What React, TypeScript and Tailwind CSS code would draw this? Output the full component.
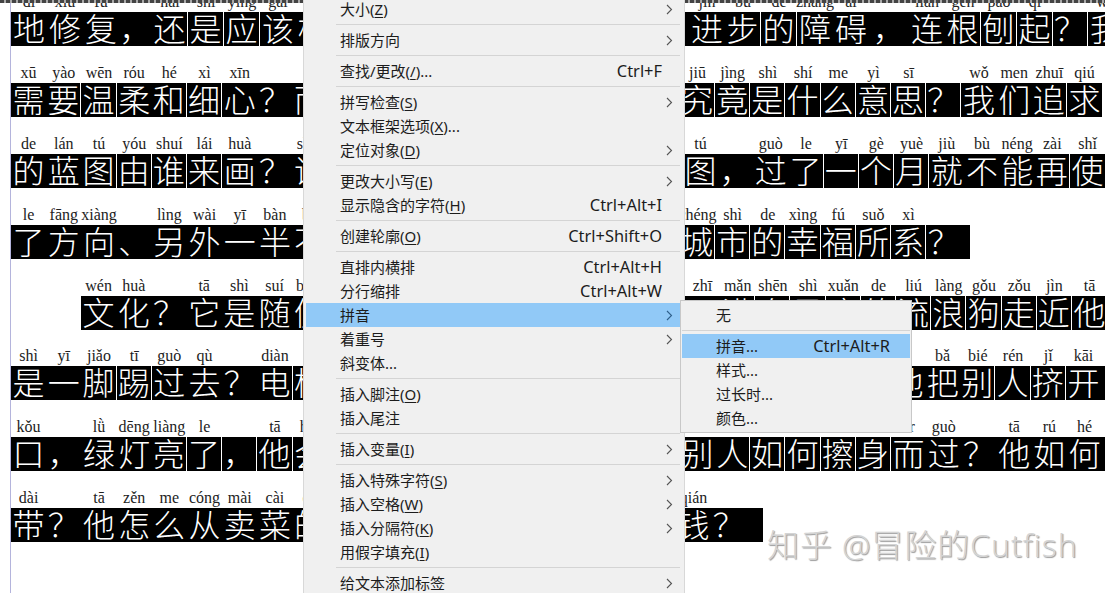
const cjk = "font-['Noto_Sans_CJK_SC',sans-serif]";

type Cell = [string, string, number?, number?];

// cell: [character, pinyin, width, 1 = white divider on the right]
const c = (s: string, p: string, w?: number, d?: number): Cell => [s, p, w, d];

type Line = { start?: number; rightStart: number; left: Cell[]; right: Cell[]; end?: number };

const lines: Line[] = [
  {
    rightStart: 689,
    left: [c("地", "dì", 36), c("修", "xiū", 36), c("复", "fù", 36), c("，", "", 33), c("还", "hái", 36, 1), c("是", "shì", 36, 1), c("应", "yīng", 36, 1), c("该", "gāi", 36), c("根", "")],
    right: [c("进", "jìn", 36), c("步", "bù", 36, 1), c("的", "de", 36, 1), c("障", "zhàng", 36), c("碍", "ài", 36), c("，", "", 40), c("连", "lián", 36), c("根", "gēn", 36, 1), c("刨", "páo", 36, 1), c("起", "qǐ", 36, 1), c("？", "", 35, 1), c("我", "wǒ", 36)],
  },
  {
    rightStart: 680,
    left: [c("需", "xū"), c("要", "yào", 35.2, 1), c("温", "wēn", 35.2, 1), c("柔", "róu"), c("和", "hé", 35.2, 1), c("细", "xì", 35.2, 1), c("心", "xīn"), c("？", ""), c("而", "")],
    right: [c("究", "jiū", 35.2, 1), c("竟", "jìng", 35.2, 1), c("是", "shì", 35.2, 1), c("什", "shí", 35.2, 1), c("么", "me", 35.2, 1), c("意", "yì", 35.2, 1), c("思", "sī", 35.2, 1), c("？", "", 35.2, 1), c("我", "wǒ"), c("们", "men"), c("追", "zhuī", 35.2, 1), c("求", "qiú")],
  },
  {
    rightStart: 683,
    left: [c("的", "de"), c("蓝", "lán"), c("图", "tú", 35.2, 1), c("由", "yóu", 35.2, 1), c("谁", "shuí", 35.2, 1), c("来", "lái", 35.2, 1), c("画", "huà"), c("？", ""), c("谁", "shuí")],
    right: [c("图", "tú"), c("，", ""), c("过", "guò"), c("了", "le", 35.2, 1), c("一", "yī", 35.2, 1), c("个", "gè", 35.2, 1), c("月", "yuè", 35.2, 1), c("就", "jiù"), c("不", "bù"), c("能", "néng"), c("再", "zài", 35.2, 1), c("使", "shǐ")],
  },
  {
    rightStart: 680,
    end: 970,
    left: [c("了", "le"), c("方", "fāng"), c("向", "xiàng"), c("、", ""), c("另", "lìng"), c("外", "wài"), c("一", "yī"), c("半", "bàn"), c("不", "bù")],
    right: [c("城", "chéng", 35.2, 1), c("市", "shì", 35.2, 1), c("的", "de", 35.2, 1), c("幸", "xìng", 35.2, 1), c("福", "fú", 35.2, 1), c("所", "suǒ", 35.2, 1), c("系", "xì", 35.2, 1), c("？", "")],
  },
  {
    start: 81,
    rightStart: 685,
    left: [c("文", "wén"), c("化", "huà"), c("？", ""), c("它", "tā"), c("是", "shì"), c("随", "suí"), c("便", "biàn")],
    right: [c("只", "zhī"), c("满", "mǎn", 35.2, 1), c("身", "shēn", 35.2, 1), c("是", "shì", 35.2, 1), c("癣", "xuǎn", 35.2, 1), c("的", "de", 35.2, 1), c("流", "liú", 35.2, 1), c("浪", "làng", 35.2, 1), c("狗", "gǒu", 35.2, 1), c("走", "zǒu", 35.2, 1), c("近", "jìn", 35.2, 1), c("他", "tā")],
  },
  {
    rightStart: 890,
    left: [c("是", "shì"), c("一", "yī"), c("脚", "jiǎo", 35.2, 1), c("踢", "tī", 35.2, 1), c("过", "guò"), c("去", "qù"), c("？", ""), c("电", "diàn", 35.2, 1), c("梯", "")],
    right: [c("他", ""), c("把", "bǎ"), c("别", "bié", 35.2, 1), c("人", "rén", 35.2, 1), c("挤", "jǐ", 35.2, 1), c("开", "kāi"), c("，", "")],
  },
  {
    rightStart: 680,
    left: [c("口", "kǒu"), c("，", ""), c("绿", "lǜ"), c("灯", "dēng"), c("亮", "liàng", 35.2, 1), c("了", "le", 35.2, 1), c("，", "", 35.2, 1), c("他", "tā", 35.2, 1), c("会", "huì")],
    right: [c("别", ""), c("人", "", 35.2, 1), c("如", "", 35.2, 1), c("何", "", 35.2, 1), c("擦", "", 35.2, 1), c("身", "", 35.2, 1), c("而", "ér"), c("过", "guò"), c("？", ""), c("他", "tā"), c("如", "rú"), c("何", "hé"), c("，", "")],
  },
  {
    rightStart: 676,
    end: 763,
    left: [c("带", "dài"), c("？", ""), c("他", "tā"), c("怎", "zěn"), c("么", "me"), c("从", "cóng"), c("卖", "mài"), c("菜", "cài"), c("的", "de")],
    right: [c("钱", "qián"), c("？", "")],
  },
];

function Segment({ cells }: { cells: Cell[] }) {
  return (
    <div className="flex shrink-0">
      {cells.map(([ch, py, w, d], i) => (
        <div key={i} className="flex flex-col shrink-0" style={{ width: w ?? 35.2 }}>
          <div className="h-[24px] pb-[1px] flex items-end justify-center whitespace-nowrap font-['Liberation_Serif',serif] text-[16px] leading-[18px] text-[#222222]">
            {py}
          </div>
          <div
            className={`h-[34px] pb-[3px] bg-black text-white flex items-center justify-center font-light text-[32px] leading-[31px] ${cjk} ${d ? "border-r border-white" : ""}`}
          >
            {ch}
          </div>
        </div>
      ))}
    </div>
  );
}

function Filler({ width }: { width: number }) {
  return (
    <div className="flex flex-col shrink-0" style={{ width }}>
      <div className="h-[24px]" />
      <div className="h-[34px] bg-black" />
    </div>
  );
}

const sum = (cells: Cell[]) => cells.reduce((a, x) => a + (x[2] ?? 35.2), 0);

function TextLine({ line }: { line: Line }) {
  const start = line.start ?? 11;
  const spacer = line.rightStart - start - sum(line.left);
  const tail = line.end ? line.end - line.rightStart - sum(line.right) : 0;
  return (
    <div className="flex h-[70.9px]" style={{ paddingLeft: start - 11 }}>
      <Segment cells={line.left} />
      <Filler width={spacer} />
      <Segment cells={line.right} />
      {tail > 0 && <Filler width={tail} />}
    </div>
  );
}

function Chevron({ on }: { on?: boolean }) {
  return (
    <svg width="7" height="11" viewBox="0 0 7 11" className="shrink-0">
      <path d="M1 1l4.5 4.5L1 10" fill="none" stroke={on ? "#2f5f8a" : "#555555"} strokeWidth="1.1" />
    </svg>
  );
}

type Item = { t: string; u?: string; tail?: string; k?: string; arrow?: boolean; on?: boolean } | "sep";

function Label({ t, u, tail }: { t: string; u?: string; tail?: string }) {
  return (
    <span className="whitespace-nowrap">
      {t}
      {u && (
        <>
          (<span className="underline underline-offset-2">{u}</span>)
        </>
      )}
      {tail}
    </span>
  );
}

const menu: Item[] = [
  { t: "大小", u: "Z", arrow: true },
  "sep",
  { t: "排版方向", arrow: true },
  "sep",
  { t: "查找/更改", u: "/", tail: "...", k: "Ctrl+F" },
  "sep",
  { t: "拼写检查", u: "S", arrow: true },
  { t: "文本框架选项", u: "X", tail: "..." },
  { t: "定位对象", u: "D", arrow: true },
  "sep",
  { t: "更改大小写", u: "E", arrow: true },
  { t: "显示隐含的字符", u: "H", k: "Ctrl+Alt+I" },
  "sep",
  { t: "创建轮廓", u: "O", k: "Ctrl+Shift+O" },
  "sep",
  { t: "直排内横排", k: "Ctrl+Alt+H" },
  { t: "分行缩排", k: "Ctrl+Alt+W" },
  { t: "拼音", arrow: true, on: true },
  { t: "着重号", arrow: true },
  { t: "斜变体", tail: "..." },
  "sep",
  { t: "插入脚注", u: "O" },
  { t: "插入尾注" },
  "sep",
  { t: "插入变量", u: "I", arrow: true },
  "sep",
  { t: "插入特殊字符", u: "S", arrow: true },
  { t: "插入空格", u: "W", arrow: true },
  { t: "插入分隔符", u: "K", arrow: true },
  { t: "用假字填充", u: "I" },
  "sep",
  { t: "给文本添加标签", arrow: true },
];

const submenu: Item[] = [
  { t: "无" },
  "sep",
  { t: "拼音", tail: "...", k: "Ctrl+Alt+R", on: true },
  { t: "样式", tail: "..." },
  { t: "过长时", tail: "..." },
  { t: "颜色", tail: "..." },
];

function MenuRows({ items, sub }: { items: Item[]; sub?: boolean }) {
  return (
    <>
      {items.map((it, i) =>
        it === "sep" ? (
          <div key={i} className={`h-[7px] flex items-center ${sub ? "" : "pl-[30px]"}`}>
            <div className="h-px w-full bg-[#d4d4d4]" />
          </div>
        ) : (
          <div
            key={i}
            className={`h-[24px] flex items-center pl-[34px] ${sub ? "pr-[20px]" : "pr-[7px]"} ${it.on ? "bg-[#91c9f7]" : ""}`}
          >
            <Label t={it.t} u={it.u} tail={it.tail} />
            <div className="flex-1" />
            {it.k && <span className={`whitespace-nowrap text-[16.4px] ${sub ? "" : "mr-[11px]"}`}>{it.k}</span>}
            {it.arrow && <Chevron on={it.on} />}
          </div>
        )
      )}
    </>
  );
}

export default function App() {
  return (
    <div className="relative w-[1105px] h-[593px] overflow-hidden bg-white">
      <div className="h-full border-l border-[#b4b4dc] ml-[10px] w-[1095px] overflow-hidden">
        <div className="-mt-[12px]">
          {lines.map((l, i) => (
            <TextLine key={i} line={l} />
          ))}
        </div>
      </div>

      {/* dashed top edge of the page */}
      <div className="absolute left-0 top-0 w-full h-[3px] bg-[repeating-linear-gradient(90deg,#444444_0_4px,#aaaaaa_4px_6px)]" />

      {/* context menu */}
      <div className="absolute left-[303px] top-0 w-[382px] h-[593px] overflow-hidden bg-[#f0f0f0] border-l border-r border-[#d8d8d8] pl-[2px] pr-[4px] text-[15px] leading-[24px] text-[#1c1c1c] font-['Noto_Sans','Noto_Sans_CJK_SC',sans-serif]">
        <div className="-mt-[3px]">
          <MenuRows items={menu} />
        </div>
      </div>

      {/* submenu */}
      <div className="absolute left-[680px] top-[300px] w-[232px] h-[133px] bg-[#f0f0f0] border border-[#c8c8c8] px-[1px] pt-[2px] text-[15px] leading-[24px] text-[#1c1c1c] font-['Noto_Sans','Noto_Sans_CJK_SC',sans-serif]">
        <MenuRows items={submenu} sub />
      </div>

      {/* watermark */}
      <div className="absolute left-[767px] top-[524px] whitespace-nowrap text-[32px] leading-[42px] tracking-[0.9px] font-light text-[#d4d4d4] [text-shadow:1px_1px_1px_#9a9a9a] font-['Noto_Sans','Noto_Sans_CJK_SC',sans-serif]">
        知乎 @冒险的Cutfish
      </div>
    </div>
  );
}
